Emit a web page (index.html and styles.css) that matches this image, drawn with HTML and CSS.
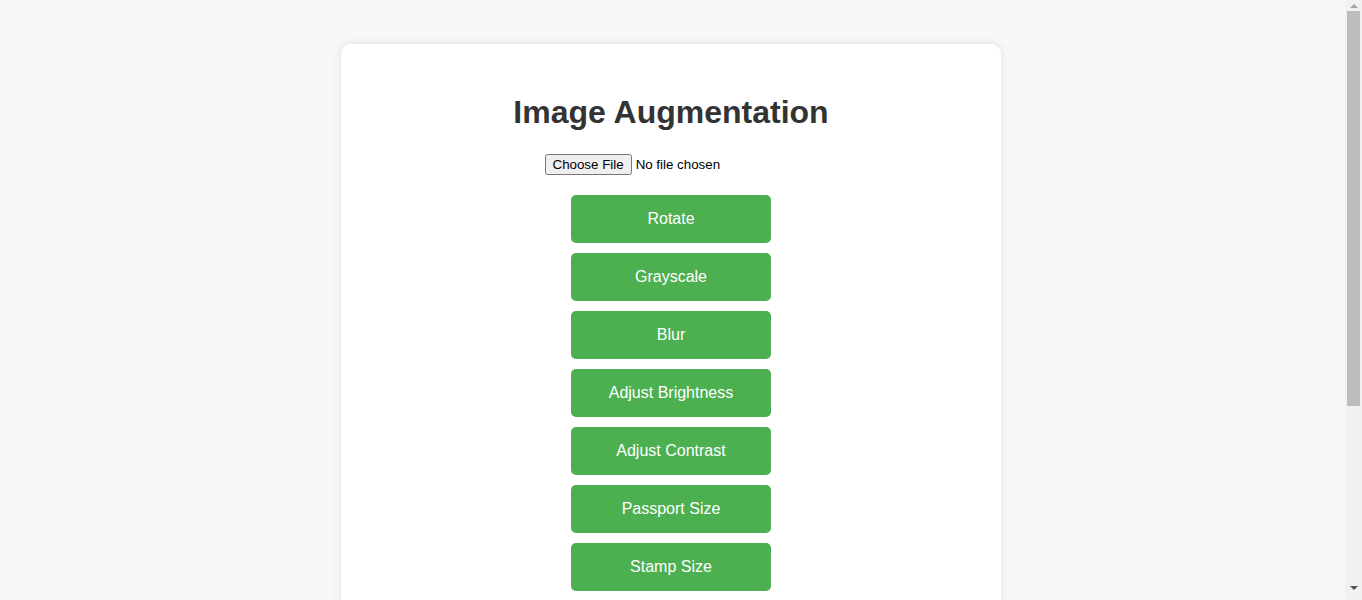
FILE: index.html
```html
<!DOCTYPE html>
<html lang="en">
<head>
<meta charset="utf-8">
<title>Image Augmentation</title>
<link rel="stylesheet" href="styles.css">
</head>
<body>
<div class="page">
  <div class="card">
    <h1 class="title">Image Augmentation</h1>
    <div class="upload">
      <input class="file-input" type="file" accept="image/*">
    </div>
    <div class="actions">
      <button class="btn" type="button">Rotate</button>
      <button class="btn" type="button">Grayscale</button>
      <button class="btn" type="button">Blur</button>
      <button class="btn" type="button">Adjust Brightness</button>
      <button class="btn" type="button">Adjust Contrast</button>
      <button class="btn" type="button">Passport Size</button>
      <button class="btn" type="button">Stamp Size</button>
    </div>
    <div class="result"></div>
  </div>
</div>
<div class="scrollbar" aria-hidden="true">
  <div class="sb-btn"><span class="sb-arrow sb-up"></span></div>
  <div class="sb-thumb"></div>
  <div class="sb-track"></div>
  <div class="sb-btn sb-btn-down"><span class="sb-arrow sb-down"></span></div>
</div>
</body>
</html>
```

FILE: styles.css
```css
html, body {
  margin: 0;
  padding: 0;
}

body {
  background: #f8f8f8;
  font-family: "Liberation Sans", Arial, sans-serif;
  color: #333;
}

.page {
  padding: 44px 20px 44px 0;
}

.card {
  width: 660px;
  box-sizing: border-box;
  margin: 0 auto;
  background: #fff;
  border-radius: 10px;
  box-shadow: 0 0 10px rgba(0, 0, 0, 0.1);
  padding: 50px 30px 40px;
  text-align: center;
}

.title {
  margin: 0;
  font-size: 32px;
  line-height: 37px;
  font-weight: bold;
  color: #333;
}

.upload {
  display: flex;
  justify-content: center;
  margin-top: 23px;
}

.file-input {
  font-family: "Liberation Sans", Arial, sans-serif;
  font-size: 13.33px;
  color: #000;
}

.actions {
  display: flex;
  flex-direction: column;
  align-items: center;
  gap: 10px;
  margin-top: 20px;
}

.btn {
  width: 200px;
  height: 48px;
  border: none;
  border-radius: 5px;
  background: #4caf50;
  color: #fff;
  font-family: "Liberation Sans", Arial, sans-serif;
  font-size: 16px;
  cursor: pointer;
}

.result {
  min-height: 170px;
}

/* decorative browser scrollbar overlay */
.scrollbar {
  position: fixed;
  top: 0;
  right: 0;
  width: 17px;
  height: 100vh;
  background: #f1f1f1;
  display: flex;
  flex-direction: column;
  align-items: center;
}

.sb-btn {
  height: 11px;
  width: 100%;
  display: flex;
  justify-content: center;
  align-items: center;
  flex-shrink: 0;
}

.sb-btn-down {
  height: 14px;
  align-items: flex-start;
}

.sb-arrow {
  width: 0;
  height: 0;
  border-left: 4px solid transparent;
  border-right: 4px solid transparent;
}

.sb-up {
  border-bottom: 4px solid #a3a3a3;
}

.sb-down {
  border-top: 4px solid #505050;
}

.sb-thumb {
  width: 13px;
  height: 395px;
  background: #bdbdbd;
  flex-shrink: 0;
}

.sb-track {
  flex: 1;
}
```
